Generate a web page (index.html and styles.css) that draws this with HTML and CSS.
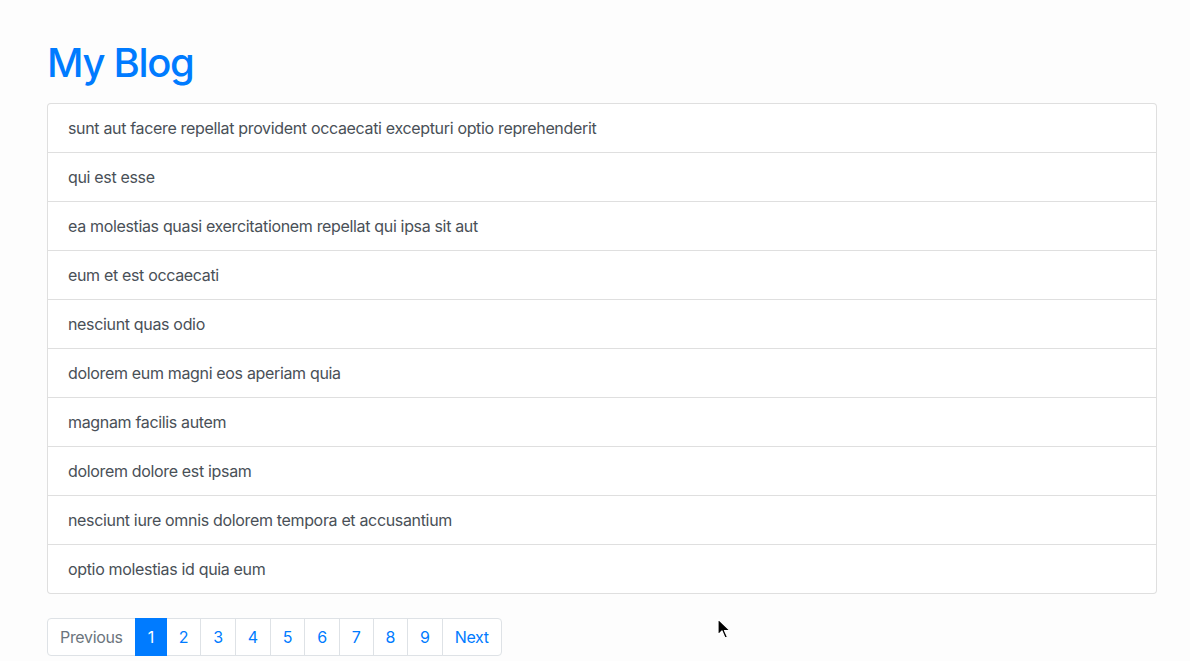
FILE: index.html
```html
<!DOCTYPE html>
<html>
<head>
<meta charset="utf-8">
<link rel="stylesheet" href="styles.css">
</head>
<body>
<div class="container">
  <h1 class="title">My Blog</h1>
  <ul class="list">
    <li class="item">sunt aut facere repellat provident occaecati excepturi optio reprehenderit</li>
    <li class="item">qui est esse</li>
    <li class="item">ea molestias quasi exercitationem repellat qui ipsa sit aut</li>
    <li class="item">eum et est occaecati</li>
    <li class="item">nesciunt quas odio</li>
    <li class="item">dolorem eum magni eos aperiam quia</li>
    <li class="item">magnam facilis autem</li>
    <li class="item">dolorem dolore est ipsam</li>
    <li class="item">nesciunt iure omnis dolorem tempora et accusantium</li>
    <li class="item">optio molestias id quia eum</li>
  </ul>
  <nav class="pagination">
    <span class="page disabled">Previous</span>
    <span class="page active">1</span>
    <span class="page">2</span>
    <span class="page">3</span>
    <span class="page">4</span>
    <span class="page">5</span>
    <span class="page">6</span>
    <span class="page">7</span>
    <span class="page">8</span>
    <span class="page">9</span>
    <span class="page">Next</span>
  </nav>
</div>
<svg class="cursor" width="14" height="22" viewBox="0 0 14 22">
  <path d="M1 1 L1 17 L5 13 L8 20 L10.5 19 L7.5 12.5 L13 12.5 Z" fill="#000" stroke="#fff" stroke-width="1.2" stroke-linejoin="round"/>
</svg>
</body>
</html>
```
FILE: styles.css
```css
html, body {
  margin: 0;
  padding: 0;
  background: #fdfdfd;
}
body {
  font-family: Inter, "Liberation Sans", sans-serif;
  font-size: 16px;
  letter-spacing: -0.021em;
  color: #212529;
  position: relative;
  height: 661px;
  overflow: hidden;
}
.container {
  width: 1110px;
  margin: 0 0 0 47px;
  padding-top: 39px;
}
.title {
  margin: 0 0 16px 0;
  font-size: 40px;
  font-weight: 500;
  line-height: 48px;
  letter-spacing: -0.033em;
  color: #007bff;
}
.list {
  list-style: none;
  margin: 0;
  padding: 0;
  border: 1px solid rgba(0,0,0,0.125);
  border-radius: 4px;
  background: #fff;
}
.item {
  padding: 12px 20px;
  line-height: 24px;
  color: #495057;
  border-top: 1px solid rgba(0,0,0,0.125);
}
.item:first-child {
  border-top: none;
}
.pagination {
  display: flex;
  margin-top: 24px;
}
.page {
  padding: 8px 12px;
  line-height: 20px;
  color: #007bff;
  background: #fff;
  border: 1px solid #dee2e6;
  margin-left: -1px;
}
.page:first-child {
  margin-left: 0;
  border-radius: 4px 0 0 4px;
}
.page:last-child {
  border-radius: 0 4px 4px 0;
}
.page.disabled {
  color: #6c757d;
}
.page.active {
  background: #007bff;
  border-color: #007bff;
  color: #fff;
  position: relative;
  z-index: 1;
}
.cursor {
  position: absolute;
  left: 717px;
  top: 618px;
}
```
